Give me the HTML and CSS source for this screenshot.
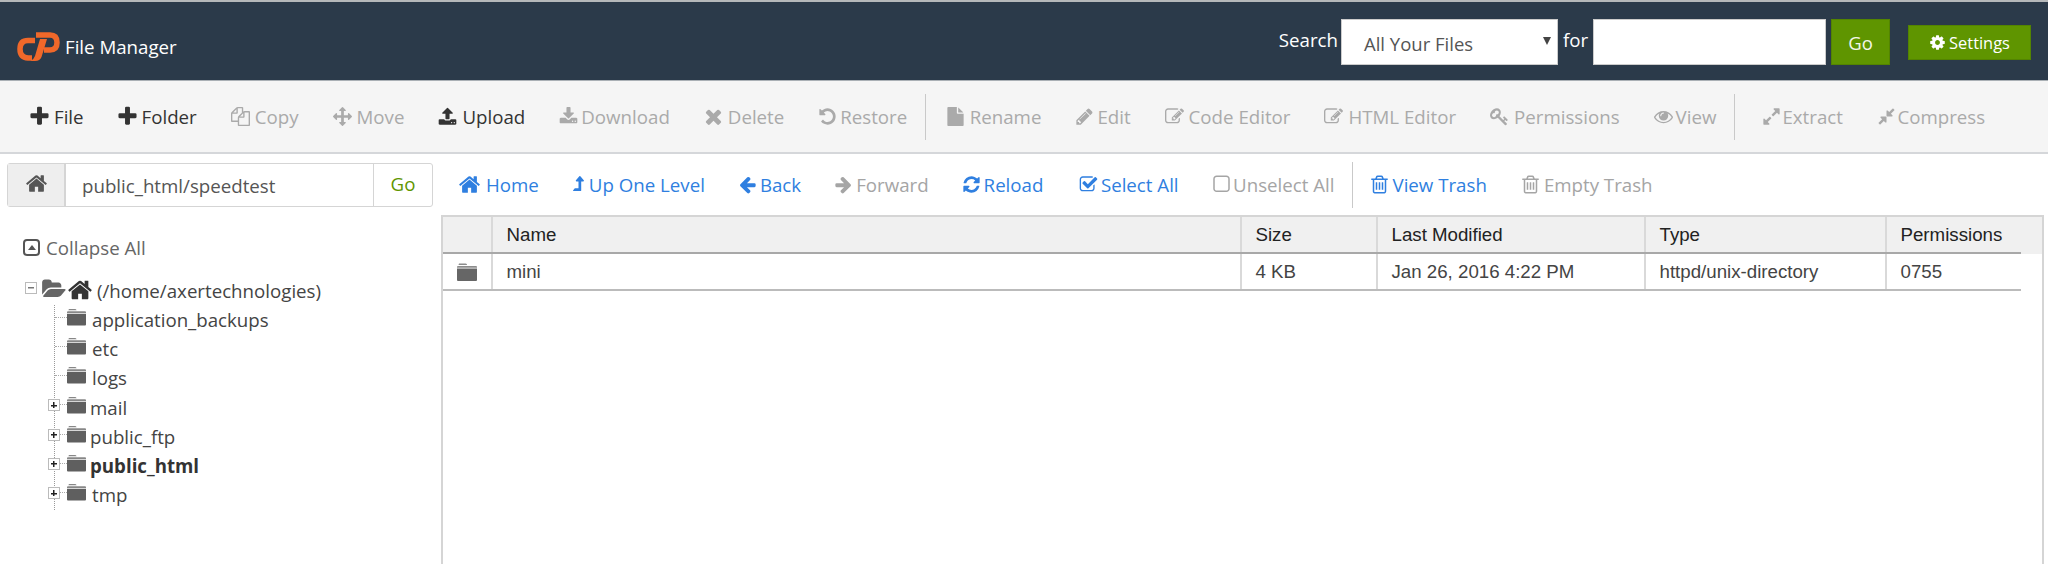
FILE: index.html
```html
<!DOCTYPE html>
<html lang="en">
<head>
<meta charset="utf-8">
<title>File Manager</title>
<link rel="stylesheet" href="styles.css">
</head>
<body>
<svg class="sprite" xmlns="http://www.w3.org/2000/svg">
<defs>
<symbol id="i-plus" viewBox="0 0 1792 1792"><path d="M1600 736v192q0 40-28 68t-68 28h-416v416q0 40-28 68t-68 28h-192q-40 0-68-28t-28-68v-416h-416q-40 0-68-28t-28-68v-192q0-40 28-68t68-28h416v-416q0-40 28-68t68-28h192q40 0 68 28t28 68v416h416q40 0 68 28t28 68z"/></symbol>
<symbol id="i-copy" viewBox="0 0 1792 1792"><path d="M1696 384q40 0 68 28t28 68v1216q0 40-28 68t-68 28h-960q-40 0-68-28t-28-68v-288h-544q-40 0-68-28t-28-68v-672q0-40 20-88t48-76l408-408q28-28 76-48t88-20h416q40 0 68 28t28 68v328q68-40 128-40h416zm-544 213l-299 299h299v-299zm-640-384l-299 299h299v-299zm196 647l316-316v-416h-384v416q0 40-28 68t-68 28h-416v640h512v-256q0-40 20-88t48-76zm956 804v-1152h-384v416q0 40-28 68t-68 28h-416v640h896z"/></symbol>
<symbol id="i-move" viewBox="0 0 1792 1792"><path d="M1792 896q0 26-19 45l-256 256q-19 19-45 19t-45-19-19-45v-128h-384v384h128q26 0 45 19t19 45-19 45l-256 256q-19 19-45 19t-45-19l-256-256q-19-19-19-45t19-45 45-19h128v-384h-384v128q0 26-19 45t-45 19-45-19l-256-256q-19-19-19-45t19-45l256-256q19-19 45-19t45 19 19 45v128h384v-384h-128q-26 0-45-19t-19-45 19-45l256-256q19-19 45-19t45 19l256 256q19 19 19 45t-19 45-45 19h-128v384h384v-128q0-26 19-45t45-19 45 19l256 256q19 19 19 45z"/></symbol>
<symbol id="i-upload" viewBox="0 0 1792 1792"><path d="M1344 1472q0-26-19-45t-45-19-45 19-19 45 19 45 45 19 45-19 19-45zm256 0q0-26-19-45t-45-19-45 19-19 45 19 45 45 19 45-19 19-45zm128-224v320q0 40-28 68t-68 28h-1472q-40 0-68-28t-28-68v-320q0-40 28-68t68-28h427q21 56 70.5 92t110.5 36h256q61 0 110.5-36t70.5-92h427q40 0 68 28t28 68zm-325-648q-17 40-59 40h-256v448q0 26-19 45t-45 19h-256q-26 0-45-19t-19-45v-448h-256q-42 0-59-40-17-39 14-69l448-448q18-19 45-19t45 19l448 448q31 30 14 69z"/></symbol>
<symbol id="i-download" viewBox="0 0 1792 1792"><path d="M1344 1344q0-26-19-45t-45-19-45 19-19 45 19 45 45 19 45-19 19-45zm256 0q0-26-19-45t-45-19-45 19-19 45 19 45 45 19 45-19 19-45zm128-224v320q0 40-28 68t-68 28h-1472q-40 0-68-28t-28-68v-320q0-40 28-68t68-28h465l135 136q58 56 136 56t136-56l136-136h464q40 0 68 28t28 68zm-325-569q17 41-14 70l-448 448q-18 19-45 19t-45-19l-448-448q-31-29-14-70 17-39 59-39h256v-448q0-26 19-45t45-19h256q26 0 45 19t19 45v448h256q42 0 59 39z"/></symbol>
<symbol id="i-times" viewBox="0 0 1792 1792"><path d="M1490 1322q0 40-28 68l-136 136q-28 28-68 28t-68-28l-294-294-294 294q-28 28-68 28t-68-28l-136-136q-28-28-28-68t28-68l294-294-294-294q-28-28-28-68t28-68l136-136q28-28 68-28t68 28l294 294 294-294q28-28 68-28t68 28l136 136q28 28 28 68t-28 68l-294 294 294 294q28 28 28 68z"/></symbol>
<symbol id="i-undo" viewBox="0 0 1792 1792"><path d="M1664 896q0 156-61 298t-164 245-245 164-298 61q-172 0-327-72.5t-264-204.5q-7-10-6.5-22.5t8.5-20.5l137-138q10-9 25-9 16 2 23 12 73 95 179 147t225 52q104 0 198.5-40.5t163.5-109.5 109.5-163.5 40.5-198.5-40.5-198.5-109.5-163.5-163.5-109.5-198.5-40.5q-98 0-188 35.5t-160 101.5l137 138q31 30 14 69-17 40-59 40h-448q-26 0-45-19t-19-45v-448q0-42 40-59 39-17 69 14l130 129q107-101 244.5-156.5t284.5-55.5q156 0 298 61t245 164 164 245 61 298z"/></symbol>
<symbol id="i-file" viewBox="0 0 1792 1792"><path d="M1152 512v-472q22 14 36 28l408 408q14 14 28 36h-472zm-128 32q0 40 28 68t68 28h544v1056q0 40-28 68t-68 28h-1344q-40 0-68-28t-28-68v-1600q0-40 28-68t68-28h800v544z"/></symbol>
<symbol id="i-pencil" viewBox="0 0 1792 1792"><path d="M491 1536l91-91-235-235-91 91v107h128v128h107zm523-928q0-22-22-22-10 0-17 7l-542 542q-7 7-7 17 0 22 22 22 10 0 17-7l542-542q7-7 7-17zm-54-192l416 416-832 832h-416v-416zm683 96q0 53-37 90l-166 166-416-416 166-165q36-38 90-38 53 0 91 38l235 234q37 39 37 91z"/></symbol>
<symbol id="i-edit" viewBox="0 0 1792 1792"><path d="M888 1184l116-116-152-152-116 116v56h96v96h56zm440-720q-16-16-33 1l-350 350q-17 17-1 33t33-1l350-350q17-17 1-33zm80 594v190q0 119-84.5 203.5t-203.5 84.5h-832q-119 0-203.5-84.5t-84.5-203.5v-832q0-119 84.5-203.5t203.5-84.5h832q63 0 117 25 15 7 18 23 3 17-9 29l-49 49q-14 14-32 8-23-6-45-6h-832q-66 0-113 47t-47 113v832q0 66 47 113t113 47h832q66 0 113-47t47-113v-126q0-13 9-22l64-64q15-15 35-7t20 29zm-96-738l288 288-672 672h-288v-288zm444 132l-92 92-288-288 92-92q28-28 68-28t68 28l152 152q28 28 28 68t-28 68z"/></symbol>
<symbol id="i-key" viewBox="0 0 1792 1792"><path d="M832 512q0-80-56-136t-136-56-136 56-56 136q0 42 19 83-41-19-83-19-80 0-136 56t-56 136 56 136 136 56 136-56 56-136q0-42-19-83 41 19 83 19 80 0 136-56t56-136zm851 704q0 17-49 66t-66 49q-9 0-28.5-16t-36.5-33-38.5-40-24.5-26l-96 96 220 220q28 28 28 68 0 42-39 81t-81 39q-40 0-68-28l-671-671q-176 131-365 131-163 0-265.5-102.5t-102.5-265.5q0-160 95-313t248-248 313-95q163 0 265.5 102.5t102.5 265.5q0 189-131 365l355 355 96-96q-3-3-26-24.5t-40-38.5-33-36.5-16-28.5q0-17 49-66t66-49q13 0 23 10 6 6 46 44.5t82 79.5 86.5 86 73 78 28.5 41z"/></symbol>
<symbol id="i-eye" viewBox="0 0 1792 1792"><path d="M1664 960q-152-236-381-353 61 104 61 225 0 185-131.5 316.5t-316.5 131.5-316.5-131.5-131.5-316.5q0-121 61-225-229 117-381 353 133 205 333.5 326.5t434.5 121.5 434.5-121.5 333.5-326.5zm-720-384q0-20-14-34t-34-14q-125 0-214.5 89.5t-89.5 214.5q0 20 14 34t34 14 34-14 14-34q0-86 61-147t147-61q20 0 34-14t14-34zm848 384q0 34-20 69-140 230-376.5 368.5t-499.5 138.5-499.5-139-376.5-368q-20-35-20-69t20-69q140-229 376.5-368t499.5-139 499.5 139 376.5 368q20 35 20 69z"/></symbol>
<symbol id="i-expand" viewBox="0 0 1792 1792"><path d="M883 1056q0 13-10 23l-332 332 144 144q19 19 19 45t-19 45-45 19h-448q-26 0-45-19t-19-45v-448q0-26 19-45t45-19 45 19l144 144 332-332q10-10 23-10t23 10l114 114q10 10 10 23zm781-864v448q0 26-19 45t-45 19-45-19l-144-144-332 332q-10 10-23 10t-23-10l-114-114q-10-10-10-23t10-23l332-332-144-144q-19-19-19-45t19-45 45-19h448q26 0 45 19t19 45z"/></symbol>
<symbol id="i-compress" viewBox="0 0 1792 1792"><path d="M896 960v448q0 26-19 45t-45 19-45-19l-144-144-332 332q-10 10-23 10t-23-10l-114-114q-10-10-10-23t10-23l332-332-144-144q-19-19-19-45t19-45 45-19h448q26 0 45 19t19 45zm755-672q0 13-10 23l-332 332 144 144q19 19 19 45t-19 45-45 19h-448q-26 0-45-19t-19-45v-448q0-26 19-45t45-19 45 19l144 144 332-332q10-10 23-10t23 10l114 114q10 10 10 23z"/></symbol>
<symbol id="i-home" viewBox="0 0 1792 1792"><path d="M1472 992v480q0 26-19 45t-45 19h-384v-384h-256v384h-384q-26 0-45-19t-19-45v-480q0-1 .5-3t.5-3l575-474 575 474q1 2 1 6zm223-69l-62 74q-8 9-21 11h-3q-13 0-21-7l-692-577-692 577q-12 8-24 7-13-2-21-11l-62-74q-8-10-7-23.5t11-21.5l719-599q32-26 76-26t76 26l244 204v-195q0-14 9-23t23-9h192q14 0 23 9t9 23v408l219 182q10 8 11 21.5t-7 23.5z"/></symbol>
<symbol id="i-up" viewBox="0 0 1792 1792"><path d="M1402 565q-18 39-58 39h-192v864q0 14-9 23t-23 9h-704q-21 0-29-18-8-20 4-35l160-192q9-11 25-11h320v-640h-192q-40 0-58-37-17-37 9-68l320-384q18-22 49-22t49 22l320 384q27 32 9 68z"/></symbol>
<symbol id="i-left" viewBox="0 0 1792 1792"><path d="M1664 896v128q0 53-32.5 90.5t-84.5 37.5h-704l293 294q38 36 38 90t-38 90l-75 76q-37 37-90 37-52 0-91-37l-651-652q-37-37-37-90 0-52 37-91l651-650q38-38 91-38 52 0 90 38l75 74q38 38 38 91t-38 91l-293 293h704q52 0 84.5 37.5t32.5 90.5z"/></symbol>
<symbol id="i-right" viewBox="0 0 1792 1792"><path d="M1600 960q0 54-37 91l-651 651q-39 37-91 37-51 0-90-37l-75-75q-38-38-38-91t38-91l293-293h-704q-52 0-84.5-37.5t-32.5-90.5v-128q0-53 32.5-90.5t84.5-37.5h704l-293-294q-38-36-38-90t38-90l75-75q38-38 90-38 53 0 91 38l651 651q37 35 37 90z"/></symbol>
<symbol id="i-refresh" viewBox="0 0 1792 1792"><path d="M1639 1056q0 5-1 7-64 268-268 434.5t-478 166.5q-146 0-282.5-55t-243.5-157l-129 129q-19 19-45 19t-45-19-19-45v-448q0-26 19-45t45-19h448q26 0 45 19t19 45-19 45l-137 137q71 66 161 102t187 36q134 0 250-65t186-179q11-17 53-117 8-23 30-23h192q13 0 22.5 9.5t9.5 22.5zm25-800v448q0 26-19 45t-45 19h-448q-26 0-45-19t-19-45 19-45l138-138q-148-137-349-137-134 0-250 65t-186 179q-11 17-53 117-8 23-30 23h-199q-13 0-22.5-9.5t-9.5-22.5v-7q65-268 270-434.5t480-166.5q146 0 284 55.5t245 156.5l130-129q19-19 45-19t45 19 19 45z"/></symbol>
<symbol id="i-check" viewBox="0 0 1792 1792"><path d="M1472 930v318q0 119-84.5 203.5t-203.5 84.5h-832q-119 0-203.5-84.5t-84.5-203.5v-832q0-119 84.5-203.5t203.5-84.5h832q63 0 117 25 15 7 18 23 3 17-9 29l-49 49q-10 10-23 10-3 0-9-2-23-6-45-6h-832q-66 0-113 47t-47 113v832q0 66 47 113t113 47h832q66 0 113-47t47-113v-254q0-13 9-22l64-64q10-10 23-10 6 0 12 3 20 8 20 29zm231-489l-814 814q-24 24-57 24t-57-24l-430-430q-24-24-24-57t24-57l110-110q24-24 57-24t57 24l263 263 647-647q24-24 57-24t57 24l110 110q24 24 24 57t-24 57z"/></symbol>
<symbol id="i-square" viewBox="0 0 1792 1792"><path d="M1312 256h-832q-66 0-113 47t-47 113v832q0 66 47 113t113 47h832q66 0 113-47t47-113v-832q0-66-47-113t-113-47zm288 160v832q0 119-84.5 203.5t-203.5 84.5h-832q-119 0-203.5-84.5t-84.5-203.5v-832q0-119 84.5-203.5t203.5-84.5h832q119 0 203.5 84.5t84.5 203.5z"/></symbol>
<symbol id="i-trash" viewBox="0 0 1792 1792"><path d="M704 736v576q0 14-9 23t-23 9h-64q-14 0-23-9t-9-23v-576q0-14 9-23t23-9h64q14 0 23 9t9 23zm256 0v576q0 14-9 23t-23 9h-64q-14 0-23-9t-9-23v-576q0-14 9-23t23-9h64q14 0 23 9t9 23zm256 0v576q0 14-9 23t-23 9h-64q-14 0-23-9t-9-23v-576q0-14 9-23t23-9h64q14 0 23 9t9 23zm128 724v-948h-896v948q0 22 7 40.5t14.5 27 10.5 8.5h832q3 0 10.5-8.5t14.5-27 7-40.5zm-672-1076h448l-48-117q-7-9-17-11h-317q-10 2-17 11zm928 32v64q0 14-9 23t-23 9h-96v948q0 83-47 143.5t-113 60.5h-832q-66 0-113-58.5t-47-141.5v-952h-96q-14 0-23-9t-9-23v-64q0-14 9-23t23-9h309l70-167q15-37 54-63t79-26h320q40 0 79 26t54 63l70 167h309q14 0 23 9t9 23z"/></symbol>
<symbol id="i-cog" viewBox="0 0 1792 1792"><path d="M1152 896q0-106-75-181t-181-75-181 75-75 181 75 181 181 75 181-75 75-181zm512-109v222q0 12-8 23t-20 13l-185 28q-19 54-39 91 35 50 107 138 10 12 10 25t-9 23q-27 37-99 108t-94 71q-12 0-26-9l-138-108q-44 23-91 38-16 136-29 186-7 28-36 28h-222q-14 0-24.5-8.5t-11.5-21.5l-28-184q-49-16-90-37l-141 107q-10 9-25 9-14 0-25-11-126-114-165-168-7-10-7-23 0-12 8-23 15-21 51-66.5t54-70.5q-27-50-41-99l-183-27q-13-2-21-12.5t-8-23.5v-222q0-12 8-23t19-13l186-28q14-46 39-92-40-57-107-138-10-12-10-24 0-10 9-23 26-36 98.5-107.5t94.5-71.5q13 0 26 10l138 107q44-23 91-38 16-136 29-186 7-28 36-28h222q14 0 24.5 8.5t11.5 21.5l28 184q49 16 90 37l142-107q9-9 24-9 13 0 25 10 129 119 165 170 7 8 7 22 0 12-8 23-15 21-51 66.5t-54 70.5q26 50 41 98l183 28q13 2 21 12.5t8 23.5z"/></symbol>
<symbol id="i-folder" viewBox="0 0 20 18"><path d="M2 0.5h6.5q1 0 1.5 1v0.5h-8.5z M1 3h18q1 0 1 1v0.8h-20v-0.8q0-1 1-1z" opacity=".75"/><path d="M0 5.6h20v11.4q0 1-1 1h-18q-1 0-1-1z"/></symbol>
<symbol id="i-open" viewBox="0 0 1900 1600"><path d="M1879 856q0 31-31 66l-336 396q-43 51-120.5 86.5t-143.5 35.5h-1088q-34 0-60.5-13t-26.5-43q0-31 31-66l336-396q43-51 120.5-86.5t143.5-35.5h1088q34 0 60.5 13t26.5 43zm-343-344v160h-832q-94 0-197 47.5t-164 119.5l-337 396-5 6q0-4-.5-12.5t-.5-12.5v-960q0-92 66-158t158-66h320q92 0 158 66t66 158v32h544q92 0 158 66t66 158z"/></symbol>
</defs>
</svg>

<header class="topbar">
  <div class="brand">
    <svg class="logo" viewBox="0 0 43 30" aria-hidden="true">
      <path class="logo-stroke" d="M18 9.500H11Q3 9.500 3 18T11 27H15"/>
      <path class="logo-stroke" d="M19 4H33Q40 4 40 11.500T33 19H27"/>
      <path class="logo-fill" d="M23 8H30L24.500 26Q23 30 18 30H13.500Q17 28 18 25Z"/>
    </svg>
    <span class="brand-name">File Manager</span>
  </div>
  <form class="search">
    <label class="search-label search-label-first">Search</label>
    <div class="select-box"><span>All Your Files</span><span class="caret"></span></div>
    <label class="search-label search-label-for">for</label>
    <div class="search-input"></div>
    <button type="button" class="btn-go">Go</button>
    <button type="button" class="btn-settings"><svg class="ico ico-cog"><use href="#i-cog"/></svg>Settings</button>
  </form>
</header>

<nav class="toolbar">
  <a class="tool"><svg class="ico ico-plus"><use href="#i-plus"/></svg>File</a>
  <a class="tool"><svg class="ico ico-plus"><use href="#i-plus"/></svg>Folder</a>
  <a class="tool off"><svg class="ico"><use href="#i-copy"/></svg>Copy</a>
  <a class="tool off"><svg class="ico"><use href="#i-move"/></svg>Move</a>
  <a class="tool"><svg class="ico"><use href="#i-upload"/></svg>Upload</a>
  <a class="tool off"><svg class="ico ico-tight"><use href="#i-download"/></svg>Download</a>
  <a class="tool off"><svg class="ico ico-plus"><use href="#i-times"/></svg>Delete</a>
  <a class="tool off"><svg class="ico ico-tight"><use href="#i-undo"/></svg>Restore</a>
  <span class="divider"></span>
  <a class="tool off"><svg class="ico"><use href="#i-file"/></svg>Rename</a>
  <a class="tool off"><svg class="ico ico-tight"><use href="#i-pencil"/></svg>Edit</a>
  <a class="tool off"><svg class="ico"><use href="#i-edit"/></svg>Code Editor</a>
  <a class="tool off"><svg class="ico"><use href="#i-edit"/></svg>HTML Editor</a>
  <a class="tool off"><svg class="ico"><use href="#i-key"/></svg>Permissions</a>
  <a class="tool off"><svg class="ico ico-tight"><use href="#i-eye"/></svg>View</a>
  <span class="divider divider-b"></span>
  <a class="tool off"><svg class="ico ico-tighter"><use href="#i-expand"/></svg>Extract</a>
  <a class="tool off"><svg class="ico ico-tighter"><use href="#i-compress"/></svg>Compress</a>
</nav>

<main class="workspace">
  <aside class="sidebar">
    <div class="path-group">
      <span class="path-home"><svg class="ico ico-pathhome"><use href="#i-home"/></svg></span>
      <span class="path-input">public_html/speedtest</span>
      <span class="path-go">Go</span>
    </div>
    <div class="collapse-all"><span class="collapse-icon"><span class="collapse-tri"></span></span>Collapse All</div>
    <div class="tree">
      <div class="tree-root">
        <span class="box box-minus"></span>
        <svg class="ico-open"><use href="#i-open"/></svg>
        <svg class="ico-roothome"><use href="#i-home"/></svg>
        <span>(/home/axertechnologies)</span>
      </div>
      <ul class="tree-list">
        <li class="tree-row leaf"><svg class="ico-folder"><use href="#i-folder"/></svg><span>application_backups</span></li>
        <li class="tree-row leaf"><svg class="ico-folder"><use href="#i-folder"/></svg><span>etc</span></li>
        <li class="tree-row leaf"><svg class="ico-folder"><use href="#i-folder"/></svg><span>logs</span></li>
        <li class="tree-row"><span class="box box-plus"></span><svg class="ico-folder"><use href="#i-folder"/></svg><span>mail</span></li>
        <li class="tree-row"><span class="box box-plus"></span><svg class="ico-folder"><use href="#i-folder"/></svg><span>public_ftp</span></li>
        <li class="tree-row current"><span class="box box-plus"></span><svg class="ico-folder"><use href="#i-folder"/></svg><span>public_html</span></li>
        <li class="tree-row leaf"><span class="box box-plus"></span><svg class="ico-folder"><use href="#i-folder"/></svg><span>tmp</span></li>
      </ul>
    </div>
  </aside>

  <section class="content">
    <nav class="navbar">
      <a class="nav"><svg class="ico ico-home"><use href="#i-home"/></svg>Home</a>
      <a class="nav"><svg class="ico ico-up"><use href="#i-up"/></svg>Up One Level</a>
      <a class="nav"><svg class="ico"><use href="#i-left"/></svg>Back</a>
      <a class="nav off"><svg class="ico"><use href="#i-right"/></svg>Forward</a>
      <a class="nav"><svg class="ico"><use href="#i-refresh"/></svg>Reload</a>
      <a class="nav nav-select"><svg class="ico"><use href="#i-check"/></svg>Select All</a>
      <a class="nav off"><svg class="ico ico-wide ico-sq"><use href="#i-square"/></svg>Unselect All</a>
      <span class="divider divider-nav"></span>
      <a class="nav"><svg class="ico ico-wide"><use href="#i-trash"/></svg>View Trash</a>
      <a class="nav off"><svg class="ico ico-wide"><use href="#i-trash"/></svg>Empty Trash</a>
    </nav>
    <div class="listing">
      <div class="head-band">
        <table class="files">
          <colgroup><col class="c1"><col class="c2"><col class="c3"><col class="c4"><col class="c5"><col class="c6"></colgroup>
          <thead><tr><th></th><th>Name</th><th>Size</th><th>Last Modified</th><th>Type</th><th>Permissions</th></tr></thead>
        </table>
      </div>
      <table class="files">
        <colgroup><col class="c1"><col class="c2"><col class="c3"><col class="c4"><col class="c5"><col class="c6"></colgroup>
        <tbody><tr><td class="cell-icon"><svg class="ico-file-folder"><use href="#i-folder"/></svg></td><td>mini</td><td>4 KB</td><td>Jan 26, 2016 4:22 PM</td><td>httpd/unix-directory</td><td>0755</td></tr></tbody>
      </table>
    </div>
  </section>
</main>
</body>
</html>
```
FILE: styles.css
```css
* { box-sizing: border-box; }
html, body { margin: 0; padding: 0; height: 100%; overflow: hidden; }
body { background: #fff; color: #333; font-family: "Open Sans", sans-serif; font-size: 18.700px; }
.sprite { position: absolute; width: 0; height: 0; }
svg { fill: currentColor; }

.topbar { height: 81px; border-top: 2px solid #b5b8ba; border-bottom: 1px solid #aab0b5; background: #2b3a4a; color: #fff; display: flex; align-items: flex-start; justify-content: space-between; padding-right: 17px; }
.brand { display: flex; align-items: center; padding: 29px 0 0 17px; }
.logo { width: 43px; height: 30px; }
.logo-stroke { fill: none; stroke: #f0682a; stroke-width: 5.500; }
.logo-fill { fill: #f0682a; }
.brand-name { font-size: 18.700px; margin-left: 5px; }
.search { display: flex; align-items: flex-start; margin: 0; padding-top: 17px; }
.search-label { line-height: 24px; padding-top: 9px; }
.search-label-first { margin-right: 3px; }
.search-label-for { width: 35px; padding-left: 5px; }
.select-box { width: 217px; height: 46px; background: #fff; border: 1px solid #ccc; color: #555; font-size: 18.500px; display: flex; align-items: center; justify-content: space-between; padding: 2px 6px 0 22px; }
.caret { width: 0; height: 0; border-left: 4px solid transparent; border-right: 4px solid transparent; border-top: 8px solid #444; margin-top: -5px; }
.search-input { width: 233px; height: 46px; background: #fff; border: 1px solid #ccc; }
.btn-go { width: 59px; height: 46px; margin-left: 5px; background: #5f9500; border: 1px solid #538400; color: #f2f6ea; font: 18.500px "Open Sans", sans-serif; padding: 0; }
.btn-settings { width: 123px; height: 35px; margin: 6px 0 0 18px; background: #5f9500; border: 1px solid #538400; color: #fff; font: 16.400px "Open Sans", sans-serif; padding: 0; display: flex; align-items: center; justify-content: center; gap: 3px; }
.ico { width: 19px; height: 19px; flex: none; }
.ico-cog { width: 17px; height: 17px; }
.ico-plus { width: 23px; height: 23px; margin: -2px; }
.ico-tight { margin-right: -2px; }
.ico-tighter { margin-right: -3.500px; }

.toolbar { height: 73px; background: #f5f5f5; border-bottom: 2px solid #d5d7da; display: flex; align-items: center; padding-left: 30px; gap: 34px; }
.tool { display: flex; align-items: center; gap: 5px; color: #333; white-space: nowrap; }
.tool.off { color: #aaa; }
.divider { width: 1px; height: 46px; background: #c9c9c9; margin: 0 -14.500px 0 -16px; flex: none; }
.divider-b { margin-right: -7.500px; }

.workspace { display: flex; align-items: stretch; height: 410px; }
.sidebar { width: 441px; flex: none; padding: 9px 8px 0 7px; }
.path-group { height: 44px; display: flex; border: 1px solid #d5d5d5; border-radius: 3px; }
.path-home { width: 58px; background: #eee; border-right: 2px solid #d5d5d5; display: flex; align-items: center; justify-content: center; color: #555; }
.ico-pathhome { width: 23px; height: 23px; margin-top: -3px; }
.path-input { flex: 1; padding: 0 16px; line-height: 43px; color: #555; }
.path-go { width: 59px; border-left: 1px solid #d5d5d5; text-align: center; line-height: 40px; color: #5f9500; }

.collapse-all { display: flex; align-items: center; color: #666; margin: 28px 0 0 16px; height: 24px; gap: 6px; }
.collapse-icon { width: 17px; height: 17px; border: 2.500px solid #555; border-radius: 4px; display: flex; align-items: center; justify-content: center; }
.collapse-tri { width: 0; height: 0; border-left: 4px solid transparent; border-right: 4px solid transparent; border-bottom: 5px solid #555; }

.tree { margin: 16.500px 0 0 18px; position: relative; color: #444; }
.tree-root { height: 29px; display: flex; align-items: center; position: relative; padding-left: 17px; }
.ico-open { width: 24px; height: 20px; color: #666; margin-right: 1px; margin-top: -3px; }
.ico-roothome { width: 26px; height: 26px; color: #333; margin-right: 4px; }
.box { position: absolute; width: 12px; height: 12px; border: 1px solid #bbb; background: #fff linear-gradient(#222,#222) center / 6px 1.500px no-repeat; }
.box-minus { left: 0; top: 6px; background-image: linear-gradient(#777,#777); }
.box-plus { left: -7px; top: 7px; background-image: linear-gradient(#222,#222), linear-gradient(#222,#222); background-size: 6px 1.500px, 1.500px 6px; }
.tree-list { list-style: none; margin: 0 0 0 29px; padding: 0; border-left: 1px dotted #999; }
.tree-row { height: 29.300px; display: flex; align-items: center; position: relative; padding-left: 12px; white-space: nowrap; }
.tree-row::before { content: ""; position: absolute; left: 0; top: 12px; width: 12px; border-top: 1px dotted #aaa; }
.ico-folder { width: 19px; height: 18px; color: #5f5f5f; margin: -5px 4px 0 0; flex: none; position: relative; }
.leaf .ico-folder { margin-right: 6px; }
.current { font-weight: 700; color: #333; }

.content { flex: 1; min-width: 0; display: flex; flex-direction: column; }
.navbar { height: 61px; display: flex; align-items: center; padding-left: 17px; gap: 33px; }
.nav { display: flex; align-items: center; gap: 3px; color: #2f7fe0; white-space: nowrap; }
.nav.off { color: #a5a5a5; }
.nav-select { margin: 0 -2.500px 0 2.500px; }
.ico-home { width: 23px; height: 23px; margin: -2px 2px -2px 0; }
.ico-wide { width: 21px; height: 21px; margin: -1px 0; }
.ico-sq { margin-left: 2px; margin-right: -2px; }
.ico-up { margin-left: -3px; margin-right: -2px; }
.divider-nav { margin: 0 -17px 0 -16px; }

.listing { flex: 1; width: 1603px; border: 2px solid #d5d5d5; border-bottom: 0; font-family: "Liberation Sans", Arial, sans-serif; font-size: 18.700px; }
.head-band { background: #f0f0f0; }
.files { width: 1578px; table-layout: fixed; border-collapse: collapse; }
.c1 { width: 49px; } .c2 { width: 749px; } .c3 { width: 136px; } .c4 { width: 268px; } .c5 { width: 241px; } .c6 { width: 135px; }
.files th, .files td { padding: 0 13.500px; text-align: left; font-weight: 400; border-right: 2px solid #d9d9d9; }
.files th:last-child, .files td:last-child { border-right: 0; }
.files th { height: 36px; color: #222; border-bottom: 2px solid #a8a8a8; }
.files td { height: 36px; color: #444; border-bottom: 2px solid #bbb; }
.cell-icon { text-align: center; }
.files td.cell-icon { padding: 0; }
.ico-file-folder { width: 22px; height: 18px; color: #666; display: block; margin: 0 auto; }
```
